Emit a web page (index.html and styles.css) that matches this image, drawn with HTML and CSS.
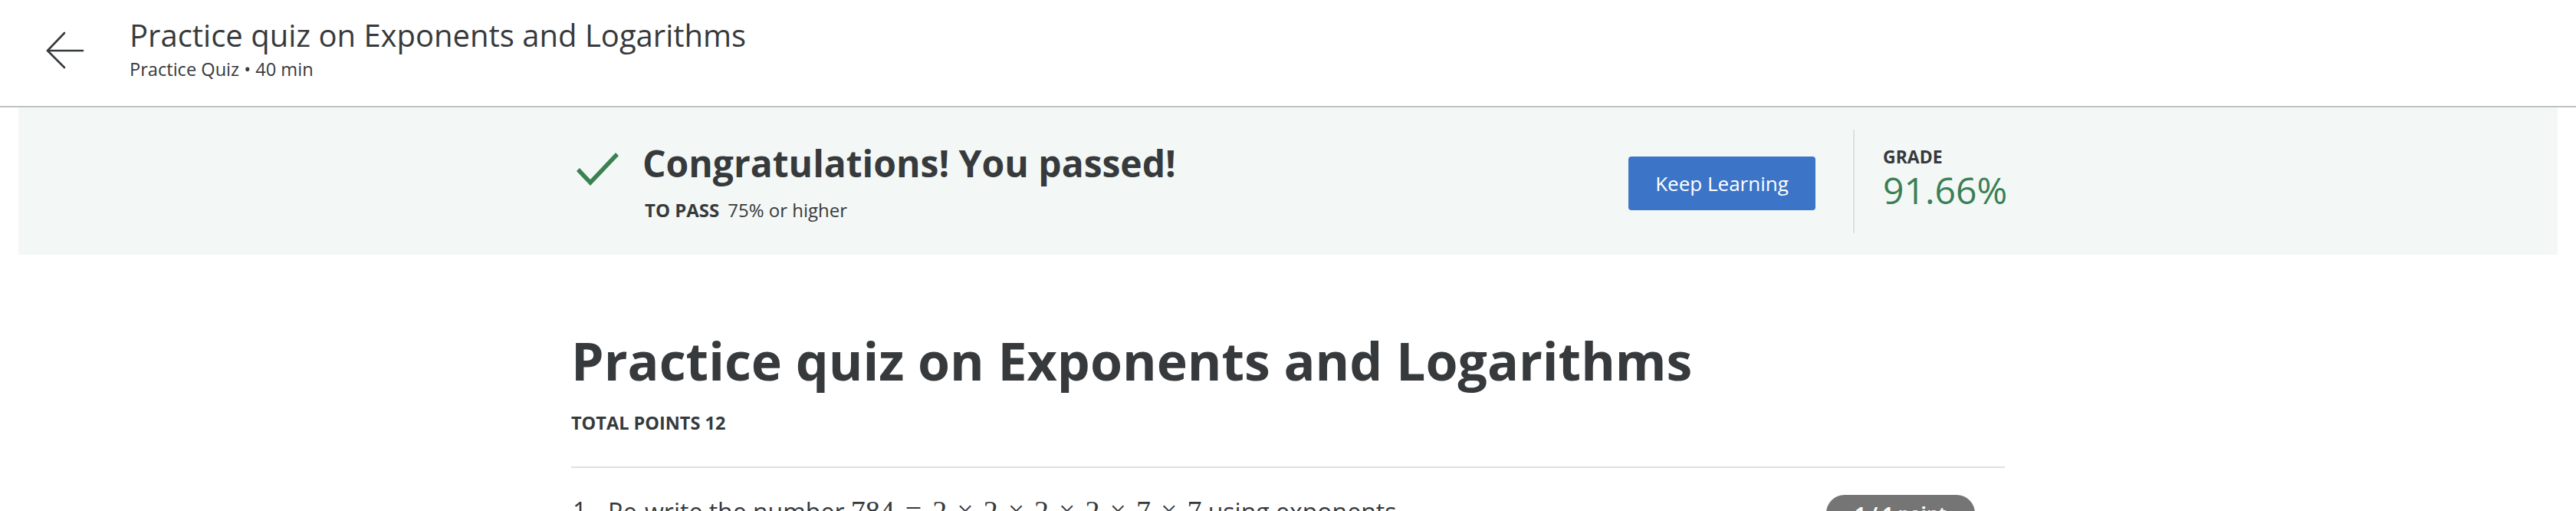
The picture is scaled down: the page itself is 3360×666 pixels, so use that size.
FILE: index.html
```html
<!DOCTYPE html>
<html lang="en">
<head>
<meta charset="utf-8">
<title>Practice quiz on Exponents and Logarithms</title>
<link rel="stylesheet" href="styles.css">
</head>
<body>
<header class="topbar">
  <a class="back" aria-label="Back">
    <svg width="52" height="52" viewBox="0 0 52 52" fill="none" stroke="#373a3c" stroke-width="2.6" stroke-linecap="round" stroke-linejoin="round">
      <path d="M4 26 H50"/>
      <path d="M26 3 L4 26 L26 48"/>
    </svg>
  </a>
  <div class="topbar-text">
    <div class="topbar-title">Practice quiz on Exponents and Logarithms</div>
    <div class="topbar-sub">Practice Quiz • 40 min</div>
  </div>
</header>

<section class="result">
  <div class="result-inner">
    <div class="result-main">
      <svg class="check" width="60" height="50" viewBox="0 0 60 50" fill="none" stroke="#3a8153" stroke-width="5.5">
        <path d="M6 27 L22 44 L57 7"/>
      </svg>
      <div class="result-text">
        <h2 class="result-title">Congratulations! You passed!</h2>
        <div class="result-pass"><span class="pass-label">TO PASS</span><span>75% or higher</span></div>
      </div>
    </div>
    <button class="keep">Keep Learning</button>
    <div class="grade">
      <div class="grade-label">GRADE</div>
      <div class="grade-value">91.66%</div>
    </div>
  </div>
</section>

<main class="quiz">
  <h1 class="quiz-title">Practice quiz on Exponents and Logarithms</h1>
  <div class="quiz-points">TOTAL POINTS 12</div>
  <div class="question">
    <div class="q-num">1.</div>
    <div class="q-text">Re-write the number <span class="math">784<span class="rel">=</span>2<span class="op">×</span>2<span class="op">×</span>2<span class="op">×</span>2<span class="op">×</span>7<span class="op">×</span>7</span> using exponents.</div>
    <div class="q-score"><span class="pill">1 / 1 point</span></div>
  </div>
</main>
</body>
</html>
```
FILE: styles.css
```css
* { box-sizing: border-box; }
html, body {
  margin: 0;
  padding: 0;
  background: #ffffff;
  color: #373a3c;
  font-family: "Open Sans", "Noto Sans", "Liberation Sans", sans-serif;
  height: 666px;
  overflow: hidden;
}

/* top bar */
.topbar {
  display: flex;
  align-items: flex-start;
  height: 140px;
  border-bottom: 2px solid #c2c2c2;
  padding-left: 58px;
}
.back {
  display: block;
  width: 52px;
  height: 52px;
  margin-top: 40px;
}
.back svg { display: block; }
.topbar-text {
  margin-left: 59px;
  padding-top: 22px;
}
.topbar-title {
  font-size: 40px;
  line-height: 48px;
  font-weight: 400;
  color: #373a3c;
}
.topbar-sub {
  margin-top: 6px;
  font-size: 23.6px;
  line-height: 28px;
  color: #373a3c;
}

/* result banner */
.result {
  margin: 0 24px;
  height: 192px;
  background: #f3f8f6;
}
.result-inner {
  width: 1870px;
  height: 100%;
  margin: 0 auto;
  display: flex;
  align-items: center;
}
.result-main {
  flex: 1;
  display: flex;
  align-items: flex-start;
  padding-left: 3px;
}
.check {
  display: block;
  flex: none;
  margin-top: 11px;
  margin-right: 30px;
}
.result-title {
  margin: 0;
  font-size: 48px;
  line-height: 60px;
  font-weight: 700;
  color: #373a3c;
}
.result-pass {
  margin-top: 16px;
  padding-left: 3px;
  font-size: 24px;
  line-height: 30px;
  display: flex;
  gap: 11px;
}
.pass-label { font-weight: 700; }

.keep {
  flex: none;
  width: 244px;
  height: 70px;
  margin-top: 6px;
  margin-right: 49px;
  border: none;
  border-radius: 4px;
  background: #3c75c7;
  color: #ffffff;
  font-family: "Open Sans", "Noto Sans", sans-serif;
  font-size: 26px;
  font-weight: 400;
  padding: 0;
}

.grade {
  flex: none;
  width: 198px;
  height: 135px;
  border-left: 2px solid #dedede;
  padding-left: 37px;
  padding-bottom: 5px;
  display: flex;
  flex-direction: column;
  justify-content: center;
}
.grade-label {
  font-size: 23px;
  line-height: 28px;
  font-weight: 700;
}
.grade-value {
  font-size: 48px;
  line-height: 60px;
  font-weight: 400;
  color: #3a7f55;
}

/* quiz body */
.quiz {
  width: 1870px;
  margin: 0 auto;
  padding-top: 96px;
}
.quiz-title {
  margin: 0;
  font-size: 68px;
  line-height: 84px;
  font-weight: 700;
  color: #373a3c;
}
.quiz-points {
  margin-top: 24px;
  font-size: 23.5px;
  line-height: 30px;
  font-weight: 700;
}
.question {
  margin-top: 42px;
  border-top: 2px solid #e0e0e0;
  padding-top: 33px;
  display: flex;
  align-items: flex-start;
}
.q-num {
  width: 48px;
  flex: none;
  font-size: 32px;
  line-height: 46px;
  padding-left: 2px;
}
.q-text {
  font-size: 32px;
  line-height: 46px;
}
.math {
  font-family: "Liberation Serif", "DejaVu Serif", serif;
  font-size: 38px;
}
.math .rel { margin: 0 14px; }
.math .op { margin: 0 13px; }
.q-score {
  margin-left: auto;
  padding-right: 39px;
  padding-top: 2px;
}
.pill {
  display: inline-block;
  height: 48px;
  line-height: 48px;
  padding: 0 37px;
  border-radius: 24px;
  background: #757575;
  color: #ffffff;
  font-size: 24px;
  font-weight: 700;
}
```
